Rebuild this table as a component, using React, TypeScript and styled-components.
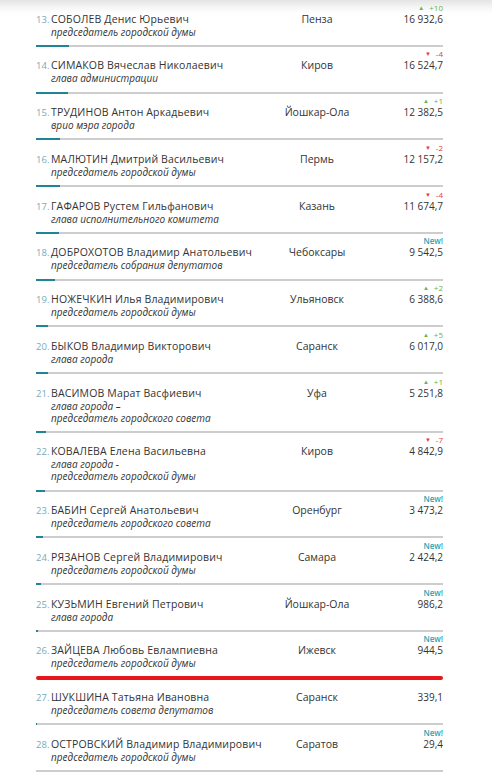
import React from "react";
import styled, { createGlobalStyle } from "styled-components";

const GlobalStyle = createGlobalStyle`
  body {
    margin: 0;
    background: linear-gradient(#e4e4e4 0, #f7f7f7 8px, #fff 14px) no-repeat;
    font-family: "Open Sans", "Noto Sans", sans-serif;
    color: #333;
  }
`;

type Change = { kind: "up" | "down" | "new"; value?: string };

interface Entry {
  place: number;
  name: string;
  role: string[];
  city: string;
  score: string;
  change?: Change;
  highlight?: boolean;
}

const entries: Entry[] = [
  { place: 13, name: "СОБОЛЕВ Денис Юрьевич", role: ["председатель городской думы"], city: "Пенза", score: "16 932,6", change: { kind: "up", value: "+10" } },
  { place: 14, name: "СИМАКОВ Вячеслав Николаевич", role: ["глава администрации"], city: "Киров", score: "16 524,7", change: { kind: "down", value: "-4" } },
  { place: 15, name: "ТРУДИНОВ Антон Аркадьевич", role: ["врио мэра города"], city: "Йошкар-Ола", score: "12 382,5", change: { kind: "up", value: "+1" } },
  { place: 16, name: "МАЛЮТИН Дмитрий Васильевич", role: ["председатель городской думы"], city: "Пермь", score: "12 157,2", change: { kind: "down", value: "-2" } },
  { place: 17, name: "ГАФАРОВ Рустем Гильфанович", role: ["глава исполнительного комитета"], city: "Казань", score: "11 674,7", change: { kind: "down", value: "-4" } },
  { place: 18, name: "ДОБРОХОТОВ Владимир Анатольевич", role: ["председатель собрания депутатов"], city: "Чебоксары", score: "9 542,5", change: { kind: "new" } },
  { place: 19, name: "НОЖЕЧКИН Илья Владимирович", role: ["председатель городской думы"], city: "Ульяновск", score: "6 388,6", change: { kind: "up", value: "+2" } },
  { place: 20, name: "БЫКОВ Владимир Викторович", role: ["глава города"], city: "Саранск", score: "6 017,0", change: { kind: "up", value: "+5" } },
  { place: 21, name: "ВАСИМОВ Марат Васфиевич", role: ["глава города –", "председатель городского совета"], city: "Уфа", score: "5 251,8", change: { kind: "up", value: "+1" } },
  { place: 22, name: "КОВАЛЕВА Елена Васильевна", role: ["глава города -", "председатель городской думы"], city: "Киров", score: "4 842,9", change: { kind: "down", value: "-7" } },
  { place: 23, name: "БАБИН Сергей Анатольевич", role: ["председатель городского совета"], city: "Оренбург", score: "3 473,2", change: { kind: "new" } },
  { place: 24, name: "РЯЗАНОВ Сергей Владимирович", role: ["председатель городской думы"], city: "Самара", score: "2 424,2", change: { kind: "new" } },
  { place: 25, name: "КУЗЬМИН Евгений Петрович", role: ["глава города"], city: "Йошкар-Ола", score: "986,2", change: { kind: "new" } },
  { place: 26, name: "ЗАЙЦЕВА Любовь Евлампиевна", role: ["председатель городской думы"], city: "Ижевск", score: "944,5", change: { kind: "new" }, highlight: true },
  { place: 27, name: "ШУКШИНА Татьяна Ивановна", role: ["председатель совета депутатов"], city: "Саранск", score: "339,1" },
  { place: 28, name: "ОСТРОВСКИЙ Владимир Владимирович", role: ["председатель городской думы"], city: "Саратов", score: "29,4", change: { kind: "new" } },
];

const List = styled.div`
  width: 407px;
  margin-left: 36px;
`;

const Row = styled.div`
  display: grid;
  grid-template-columns: 221px 120px 66px;
  padding: 12.5px 0 7.25px;
  font-size: 10.5px;
  line-height: 13px;
`;

const Person = styled.div`
  display: flex;
`;

const Place = styled.span`
  width: 15px;
  flex-shrink: 0;
  font-size: 9.5px;
  color: #7aaab8;
`;

const Name = styled.div`
  white-space: nowrap;
  letter-spacing: 0.15px;
`;

const Role = styled.div`
  font-size: 10px;
  font-style: italic;
  line-height: 12px;
`;

const City = styled.div`
  text-align: center;
  white-space: nowrap;
`;

const Score = styled.div`
  display: flex;
  flex-direction: column;
  align-items: flex-end;
  white-space: nowrap;
  font-size: 10px;
`;

const Delta = styled.div<{ $kind: Change["kind"] }>`
  height: 10px;
  margin-top: -10px;
  font-size: 8px;
  line-height: 10px;
  color: ${(p) =>
    p.$kind === "up" ? "#6cb33f" : p.$kind === "down" ? "#e2403c" : "#2ba3b3"};
  font-weight: ${(p) => (p.$kind === "new" ? 600 : 400)};
`;

const Arrow = styled.span`
  font-size: 6px;
  margin-right: 5px;
  vertical-align: 1px;
`;

const Track = styled.div<{ $red?: boolean }>`
  height: ${(p) => (p.$red ? "4px" : "2px")};
  margin-top: ${(p) => (p.$red ? "-1px" : "0")};
  margin-bottom: ${(p) => (p.$red ? "-1px" : "0")};
  background: ${(p) => (p.$red ? "#e8161b" : "#cdcdcd")};
  border-radius: ${(p) => (p.$red ? "2px" : "0")};
`;

const Fill = styled.div`
  height: 100%;
  background: #1f8594;
`;

const MAX = 16932.6;

const parseScore = (s: string) => parseFloat(s.replace(/\s/g, "").replace(",", "."));

const DeltaLabel: React.FC<{ change: Change }> = ({ change }) => (
  <Delta $kind={change.kind}>
    {change.kind === "new" ? (
      "New!"
    ) : (
      <>
        <Arrow>{change.kind === "up" ? "▲" : "▼"}</Arrow>
        {change.value}
      </>
    )}
  </Delta>
);

export default function App() {
  return (
    <>
      <GlobalStyle />
      <List>
        {entries.map((e) => (
          <div key={`rating-${e.place}`}>
            <Row>
              <Person>
                <Place>{e.place}.</Place>
                <div>
                  <Name>{e.name}</Name>
                  {e.role.map((r, i) => (
                    <Role key={i}>{r}</Role>
                  ))}
                </div>
              </Person>
              <City>{e.city}</City>
              <Score>
                {e.change && <DeltaLabel change={e.change} />}
                <span>{e.score}</span>
              </Score>
            </Row>
            <Track $red={e.highlight}>
              {!e.highlight && (
                <Fill style={{ width: `${(parseScore(e.score) / MAX) * 33}px` }} />
              )}
            </Track>
          </div>
        ))}
      </List>
    </>
  );
}
